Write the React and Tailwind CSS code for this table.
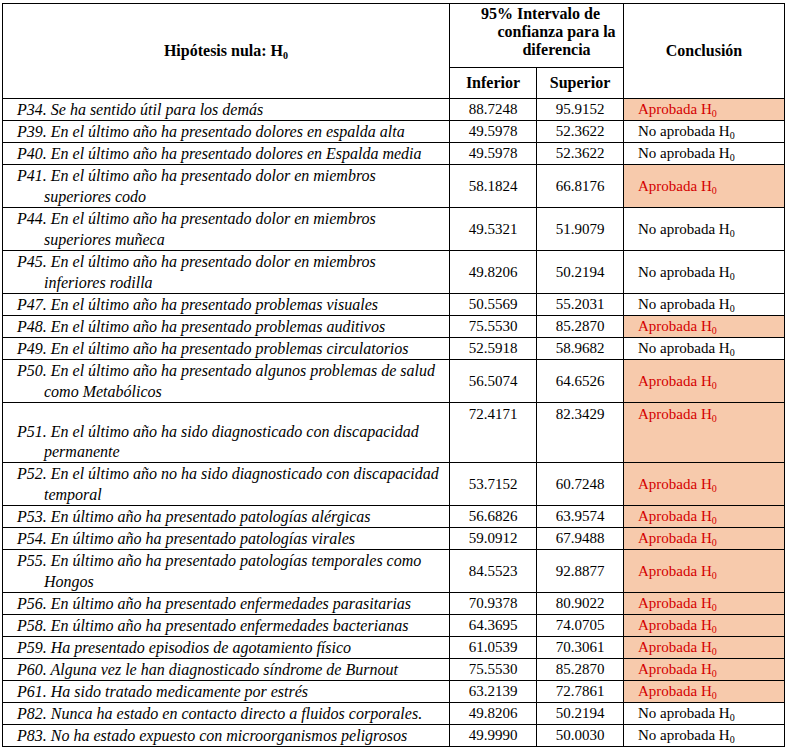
import React from "react";

const rows = [
  { t: "P34. Se ha sentido útil para los demás", a: "88.7248", b: "95.9152", ok: true },
  { t: "P39. En el último año ha presentado dolores en espalda alta", a: "49.5978", b: "52.3622", ok: false },
  { t: "P40. En el último año ha presentado dolores en Espalda media", a: "49.5978", b: "52.3622", ok: false },
  { t: "P41. En el último año ha presentado dolor en miembros superiores codo", a: "58.1824", b: "66.8176", ok: true },
  { t: "P44. En el último año ha presentado dolor en miembros superiores muñeca", a: "49.5321", b: "51.9079", ok: false },
  { t: "P45. En el último año ha presentado dolor en miembros inferiores rodilla", a: "49.8206", b: "50.2194", ok: false },
  { t: "P47. En el último año ha presentado problemas visuales", a: "50.5569", b: "55.2031", ok: false },
  { t: "P48. En el último año ha presentado problemas auditivos", a: "75.5530", b: "85.2870", ok: true },
  { t: "P49. En el último año ha presentado problemas circulatorios", a: "52.5918", b: "58.9682", ok: false },
  { t: "P50. En el último año ha presentado algunos problemas de salud como Metabólicos", a: "56.5074", b: "64.6526", ok: true },
  { t: "P51. En el último año ha sido diagnosticado con discapacidad permanente", a: "72.4171", b: "82.3429", ok: true, tall: true },
  { t: "P52. En el último año no ha sido diagnosticado con discapacidad temporal", a: "53.7152", b: "60.7248", ok: true },
  { t: "P53. En último año ha presentado patologías alérgicas", a: "56.6826", b: "63.9574", ok: true },
  { t: "P54. En último año ha presentado patologías virales", a: "59.0912", b: "67.9488", ok: true },
  { t: "P55. En último año ha presentado patologías temporales como Hongos", a: "84.5523", b: "92.8877", ok: true },
  { t: "P56. En último año ha presentado enfermedades parasitarias", a: "70.9378", b: "80.9022", ok: true },
  { t: "P58. En último año ha presentado enfermedades bacterianas", a: "64.3695", b: "74.0705", ok: true },
  { t: "P59. Ha presentado episodios de agotamiento físico", a: "61.0539", b: "70.3061", ok: true },
  { t: "P60. Alguna vez le han diagnosticado síndrome de Burnout", a: "75.5530", b: "85.2870", ok: true },
  { t: "P61. Ha sido tratado medicamente por estrés", a: "63.2139", b: "72.7861", ok: true },
  { t: "P82. Nunca ha estado en contacto directo a fluidos corporales.", a: "49.8206", b: "50.2194", ok: false },
  { t: "P83. No ha estado expuesto con microorganismos peligrosos", a: "49.9990", b: "50.0030", ok: false },
];

function H0() {
  return (
    <>
      H<span className="text-[10px] relative top-[3px] leading-none">0</span>
    </>
  );
}

export default function App() {
  return (
    <div className="bg-white min-h-[752px] pl-[2px] pt-[3px]">
      {/* font set on the table itself so every cell picks it up */}
      <table className="w-[782px] table-fixed border-collapse border border-black font-['Liberation_Serif',serif] text-black text-[15px]">
        <colgroup>
          <col className="w-[447px]" />
          <col className="w-[87px]" />
          <col className="w-[87px]" />
          <col className="w-[161px]" />
        </colgroup>
        <thead>
          <tr className="h-[64px]">
            <th rowSpan={2} className="border border-black font-bold text-[16px] text-center align-middle">
              Hipótesis nula: <H0 />
            </th>
            <th colSpan={2} className="border border-black font-bold text-[16px] text-center align-top leading-[18px] pt-[1px] pl-[40px]">
              <span className="block whitespace-nowrap relative -left-[16px]">95% Intervalo de</span>
              confianza para la diferencia
            </th>
            <th rowSpan={2} className="border border-black font-bold text-[16px] text-center align-middle">
              Conclusión
            </th>
          </tr>
          <tr className="h-[31px]">
            <th className="border border-black font-bold text-[16px] text-center">Inferior</th>
            <th className="border border-black font-bold text-[16px] text-center">Superior</th>
          </tr>
        </thead>
        <tbody>
          {rows.map((r) => (
            <tr key={r.t}>
              <td
                className={
                  "border border-black italic text-[16px] pl-[41px] -indent-[27px] pr-[9px] " +
                  (r.tall ? "leading-[20px] align-bottom h-[60px]" : "leading-[21px] align-middle")
                }
              >
                {r.t}
              </td>
              <td className={"border border-black text-center leading-[21px] " + (r.tall ? "align-top pt-[1px]" : "align-middle")}>
                {r.a}
              </td>
              <td className={"border border-black text-center leading-[21px] " + (r.tall ? "align-top pt-[1px]" : "align-middle")}>
                {r.b}
              </td>
              <td
                className={
                  "border border-black pl-[14px] leading-[21px] " +
                  (r.tall ? "align-top pt-[1px] " : "align-middle ") +
                  (r.ok ? "bg-[#f7caac] text-[#d40000]" : "")
                }
              >
                {r.ok ? "Aprobada " : "No aprobada "}
                <H0 />
              </td>
            </tr>
          ))}
        </tbody>
      </table>
    </div>
  );
}
